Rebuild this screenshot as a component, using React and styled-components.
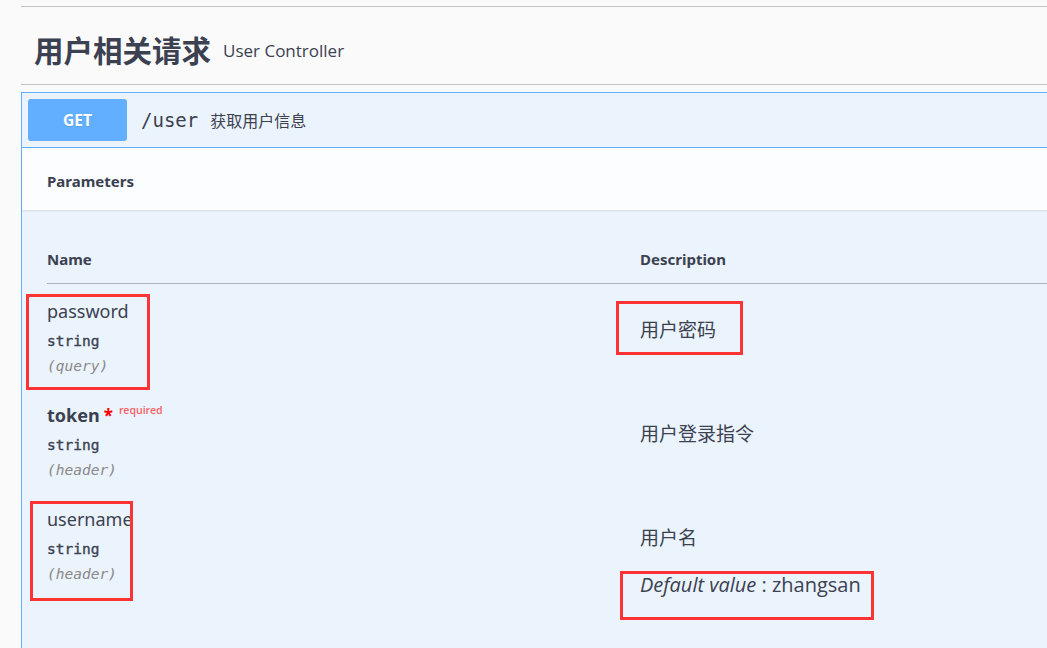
import React from "react";
import styled, { createGlobalStyle } from "styled-components";

const Global = createGlobalStyle`
  html, body { margin: 0; padding: 0; background: #fafafa; overflow: hidden; }
  body { font-family: "Noto Sans", "Noto Sans CJK SC", sans-serif; color: #3b4151; }
`;

const sans = `"Noto Sans", "Noto Sans CJK SC", sans-serif`;
const cjk = `"Noto Sans CJK SC", "Noto Sans", sans-serif`;
const mono = `"DejaVu Sans Mono", "Liberation Mono", monospace`;

const Page = styled.div`
  padding: 6px 0 0 21px;
  width: 1100px;
  min-height: 648px;
  box-sizing: border-box;
`;

const TagHeader = styled.div`
  display: flex;
  align-items: center;
  gap: 12px;
  height: 79px;
  padding: 7px 0 0 13px;
  box-sizing: border-box;
  border-top: 1px solid rgba(59, 65, 81, 0.3);
  border-bottom: 1px solid rgba(59, 65, 81, 0.3);
`;

const TagTitle = styled.h2`
  margin: 0;
  font-family: ${cjk};
  font-weight: 700;
  font-size: 29.5px;
  line-height: 36px;
  color: #3b4151;
`;

const TagSub = styled.small`
  font-family: "Open Sans", ${cjk};
  font-size: 17px;
  line-height: 24px;
  color: #3b4151;
  padding-top: 3px;
`;

const OpBlock = styled.div`
  position: relative;
  margin-top: 7px;
  border: 1px solid #61affe;
  border-right: none;
  background: #ebf3fc;
  min-height: 560px;
`;

const Summary = styled.div`
  display: flex;
  align-items: center;
  padding: 6px;
  border-bottom: 1px solid #61affe;
`;

const Method = styled.span`
  display: flex;
  align-items: center;
  justify-content: center;
  width: 99px;
  height: 42px;
  border-radius: 3px;
  background: #61affe;
  color: #fff;
  font-family: ${sans};
  font-weight: 700;
  font-size: 15.5px;
  text-shadow: 0 1px 0 rgba(0, 0, 0, 0.1);
`;

const Path = styled.span`
  margin-left: 14px;
  font-family: ${mono};
  font-size: 19px;
  color: #3b4151;
`;

const SummaryDesc = styled.span`
  margin-left: 12px;
  font-family: ${cjk};
  font-size: 16px;
  color: #3b4151;
`;

const SectionHeader = styled.div`
  display: flex;
  align-items: center;
  height: 62px;
  padding: 3px 25px 0;
  box-sizing: border-box;
  background: rgba(255, 255, 255, 0.8);
  box-shadow: 0 1px 2px rgba(0, 0, 0, 0.1);
`;

const SectionTitle = styled.h4`
  margin: 0;
  font-family: ${sans};
  font-weight: 700;
  font-size: 15px;
  color: #3b4151;
`;

const TableWrap = styled.div`
  padding: 38px 0 40px 25px;
`;

const Table = styled.table`
  border-collapse: collapse;
  width: 1050px;
`;

const Th = styled.th`
  text-align: left;
  padding: 0 0 13px;
  font-family: ${sans};
  font-weight: 700;
  font-size: 15px;
  line-height: 22px;
  color: #3b4151;
  border-bottom: 1px solid rgba(59, 65, 81, 0.2);
  width: ${(p) => p.$w || "auto"};
`;

const Td = styled.td`
  position: relative;
  vertical-align: top;
  padding: ${(p) => (p.$desc ? "32px 0 0" : "15px 0 11px")};
`;

const Name = styled.div`
  font-family: ${sans};
  font-size: 18px;
  line-height: 24px;
  height: 24px;
  font-weight: ${(p) => (p.$required ? 700 : 400)};
  color: #3b4151;
  white-space: nowrap;
`;

const Star = styled.span`
  color: #f00;
  font-size: 17px;
  line-height: 0;
  margin-left: 4px;
`;

const Req = styled.span`
  position: relative;
  top: -8px;
  margin-left: 6px;
  font-size: 10.5px;
  line-height: 0;
  font-weight: 600;
  color: rgba(255, 0, 0, 0.6);
`;

const Type = styled.div`
  margin-top: 7px;
  font-family: ${mono};
  font-size: 14.5px;
  font-weight: 400;
  -webkit-text-stroke: 0.35px #3b4151;
  line-height: 22px;
  color: #3b4151;
`;

const In = styled.div`
  margin-top: 3px;
  font-family: ${mono};
  font-size: 14.5px;
  font-style: italic;
  line-height: 22px;
  color: #888;
`;

const Desc = styled.div`
  font-family: ${cjk};
  font-size: 19px;
  line-height: 26px;
  color: #3b4151;
`;

const DefaultVal = styled.div`
  margin-top: 22px;
  font-family: "Open Sans", ${sans};
  font-size: 20px;
  line-height: 26px;
  color: #3b4151;
  i { font-style: italic; }
`;

const Mark = styled.div`
  position: absolute;
  border: 3px solid #fe3434;
  box-sizing: border-box;
  pointer-events: none;
`;

const params = [
  { name: "password", type: "string", in: "(query)", desc: "用户密码" },
  { name: "token", type: "string", in: "(header)", desc: "用户登录指令", required: true },
  { name: "username", type: "string", in: "(header)", desc: "用户名", def: "zhangsan" },
];

// annotation boxes, relative to the op block (block origin at x 21, y 92)
const marks = [
  { left: 4, top: 201, width: 124, height: 96 },
  { left: 594, top: 208, width: 127, height: 54 },
  { left: 8, top: 408, width: 103, height: 100 },
  { left: 598, top: 478, width: 254, height: 49 },
];

export default function App() {
  return (
    <>
      <Global />
      <Page>
        <TagHeader>
          <TagTitle>用户相关请求</TagTitle>
          <TagSub>User Controller</TagSub>
        </TagHeader>
        <OpBlock>
          <Summary>
            <Method>GET</Method>
            <Path>/user</Path>
            <SummaryDesc>获取用户信息</SummaryDesc>
          </Summary>
          <SectionHeader>
            <SectionTitle>Parameters</SectionTitle>
          </SectionHeader>
          <TableWrap>
            <Table>
              <thead>
                <tr>
                  <Th $w="593px">Name</Th>
                  <Th>Description</Th>
                </tr>
              </thead>
              <tbody>
                {params.map((p) => (
                  <tr key={p.name}>
                    <Td>
                      <Name $required={p.required}>
                        {p.name}
                        {p.required && (
                          <>
                            <Star>*</Star>
                            <Req>required</Req>
                          </>
                        )}
                      </Name>
                      <Type>{p.type}</Type>
                      <In>{p.in}</In>
                    </Td>
                    <Td $desc>
                      <Desc>{p.desc}</Desc>
                      {p.def && (
                        <DefaultVal>
                          <i>Default value</i> : {p.def}
                        </DefaultVal>
                      )}
                    </Td>
                  </tr>
                ))}
              </tbody>
            </Table>
          </TableWrap>
          {marks.map((m, i) => (
            <Mark key={i} style={{ left: m.left, top: m.top, width: m.width, height: m.height }} />
          ))}
        </OpBlock>
      </Page>
    </>
  );
}
